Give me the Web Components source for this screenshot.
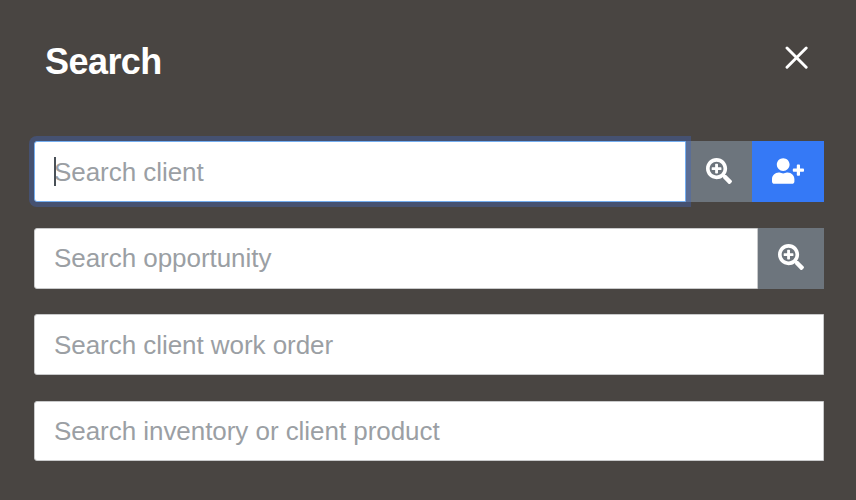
<!DOCTYPE html>
<html lang="en">
<head>
<meta charset="utf-8">
<title>Search</title>
<style>
    body {
        margin: 0;
        background: #494542;
        font-family: "Liberation Sans", Arial, sans-serif;
    }
</style>
</head>
<body>
<search-panel heading="Search">
    <search-field placeholder="Search client" focused>
        <icon-button icon="search-plus" label="Find client"></icon-button>
        <icon-button icon="user-plus" label="Add client" variant="primary"></icon-button>
    </search-field>
    <search-field placeholder="Search opportunity">
        <icon-button icon="search-plus" label="Find opportunity"></icon-button>
    </search-field>
    <search-field placeholder="Search client work order"></search-field>
    <search-field placeholder="Search inventory or client product"></search-field>
</search-panel>

<script>
const ICONS = {
    'search-plus': {
        width: 512,
        path: 'M304 192v32c0 6.6-5.4 12-12 12h-56v56c0 6.6-5.4 12-12 12h-32c-6.6 0-12-5.4-12-12v-56h-56c-6.6 0-12-5.4-12-12v-32c0-6.6 5.4-12 12-12h56v-56c0-6.6 5.4-12 12-12h32c6.6 0 12 5.4 12 12v56h56c6.6 0 12 5.4 12 12zm201 284.7L476.7 505c-9.4 9.4-24.6 9.4-33.9 0L343 405.3c-4.5-4.5-7-10.6-7-17V372c-35.3 27.6-79.7 44-128 44C93.1 416 0 322.9 0 208S93.1 0 208 0s208 93.1 208 208c0 48.3-16.4 92.7-44 128h16.3c6.4 0 12.5 2.5 17 7l99.7 99.7c9.3 9.4 9.3 24.6 0 34zM344 208c0-75.2-60.8-136-136-136S72 132.8 72 208s60.8 136 136 136 136-60.8 136-136z'
    },
    'user-plus': {
        width: 640,
        path: 'M624 208h-64v-64c0-8.8-7.2-16-16-16h-32c-8.8 0-16 7.2-16 16v64h-64c-8.8 0-16 7.2-16 16v32c0 8.8 7.2 16 16 16h64v64c0 8.8 7.2 16 16 16h32c8.8 0 16-7.2 16-16v-64h64c8.8 0 16-7.2 16-16v-32c0-8.8-7.2-16-16-16zm-400 48c70.7 0 128-57.3 128-128S294.7 0 224 0 96 57.3 96 128s57.3 128 128 128zm89.6 32h-16.7c-22.2 10.2-46.9 16-72.9 16s-50.6-5.8-72.9-16h-16.7C60.2 288 0 348.2 0 422.4V464c0 26.5 21.5 48 48 48h352c26.5 0 48-21.5 48-48v-41.6c0-74.2-60.2-134.4-134.4-134.4z'
    }
};

// Square button attached to the end of a field
class IconButton extends HTMLElement {
    constructor() {
        super();
        this.attachShadow({ mode: 'open' });
    }

    connectedCallback() {
        const icon = ICONS[this.getAttribute('icon')];
        this.shadowRoot.innerHTML = `
            <style>
                :host {
                    display: flex;
                    --button-bg: #6d757d;
                }
                :host([variant="primary"]) {
                    --button-bg: #3579f6;
                }
                button {
                    display: flex;
                    align-items: center;
                    padding: 0 20px 1.6px;
                    border: 0;
                    background: var(--button-bg);
                    color: #fff;
                    cursor: pointer;
                }
                svg {
                    display: block;
                    height: 26px;
                    fill: currentColor;
                }
            </style>
            <button type="button" aria-label="${this.getAttribute('label') || ''}">
                <svg width="${Math.floor(26 * icon.width / 512)}" viewBox="0 0 ${icon.width} 512"><path d="${icon.path}"/></svg>
            </button>
        `;
    }
}

// Text field with its hint and a slot for the attached buttons
class SearchField extends HTMLElement {
    constructor() {
        super();
        this.attachShadow({ mode: 'open' });
    }

    connectedCallback() {
        this.shadowRoot.innerHTML = `
            <style>
                :host {
                    display: flex;
                }
                .control {
                    flex: 1;
                    display: flex;
                    align-items: center;
                    position: relative;
                    box-sizing: border-box;
                    padding: 0 18px 0 19px;
                    border: 1px solid #c8c9ca;
                    border-radius: 3px 0 0 3px;
                    background: #fff;
                    color: #9b9fa4;
                    font-size: 26px;
                    line-height: 38px;
                    letter-spacing: -0.05px;
                    white-space: nowrap;
                    cursor: text;
                }
                :host([focused]) .control {
                    z-index: 1;
                    border-color: #74aef0;
                    box-shadow: 0 0 0 5px rgba(65, 101, 184, 0.4);
                }
                :host([focused]) .control::before {
                    content: "";
                    position: absolute;
                    left: 19px;
                    top: 15px;
                    width: 2px;
                    height: 29px;
                    background: #495057;
                }
            </style>
            <div class="control" role="textbox"><span>${this.getAttribute('placeholder') || ''}</span></div>
            <slot></slot>
        `;
    }
}

class SearchPanel extends HTMLElement {
    constructor() {
        super();
        this.attachShadow({ mode: 'open' });
    }

    connectedCallback() {
        this.shadowRoot.innerHTML = `
            <style>
                :host {
                    display: block;
                    box-sizing: border-box;
                    height: 500px;
                    padding: 41px 32px 0 34px;
                }
                header {
                    display: flex;
                    justify-content: space-between;
                    align-items: flex-start;
                    height: 100px;
                    padding: 0 16px 0 11px;
                    box-sizing: border-box;
                    color: #fff;
                }
                h1 {
                    margin: 0;
                    font-size: 36px;
                    line-height: 42px;
                    font-weight: 700;
                    letter-spacing: -0.55px;
                }
                .close {
                    display: flex;
                    margin-top: 5px;
                    padding: 0;
                    border: 0;
                    background: none;
                    color: inherit;
                    cursor: pointer;
                }
                .fields {
                    display: grid;
                    grid-template-rows: 61px 61px 61px 60px;
                    row-gap: 25.6px;
                }
            </style>
            <header>
                <h1>${this.getAttribute('heading') || ''}</h1>
                <button class="close" type="button" aria-label="Close">
                    <svg width="23" height="23" viewBox="0 0 23 23" fill="none" stroke="currentColor" stroke-width="2.9" stroke-linecap="round"><path d="M2 2l19.2 19.2M21.2 2L2 21.2"/></svg>
                </button>
            </header>
            <div class="fields"><slot></slot></div>
        `;
    }
}

customElements.define('icon-button', IconButton);
customElements.define('search-field', SearchField);
customElements.define('search-panel', SearchPanel);
</script>
</body>
</html>
